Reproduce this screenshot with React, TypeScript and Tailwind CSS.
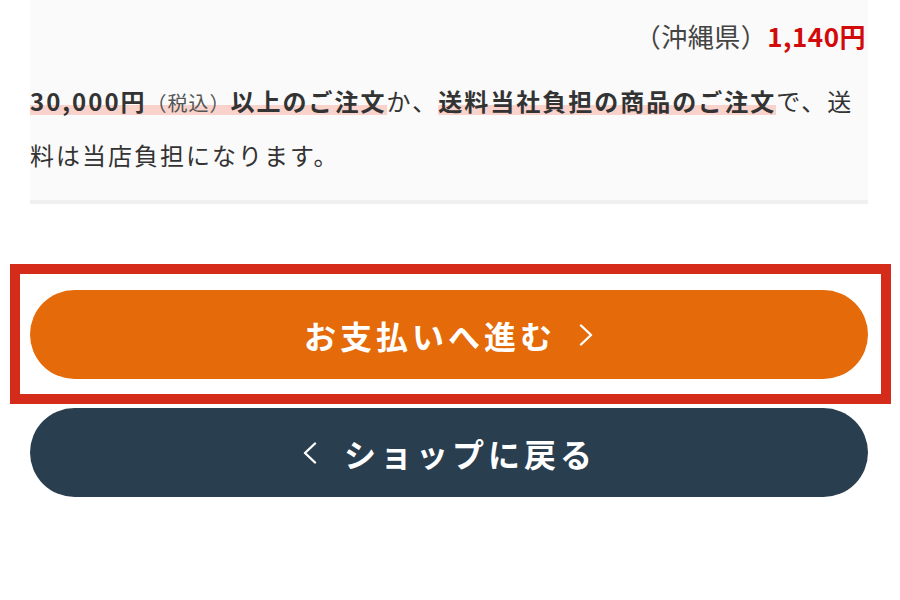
import React from "react";

const hl = "bg-[linear-gradient(transparent_62%,#f8d2cb_62%,#f8d2cb_92%,transparent_92%)] font-bold";

function Chevron({ dir }: { dir: "left" | "right" }) {
  return (
    <svg width="16" height="22" viewBox="0 0 16 22" fill="none" className="shrink-0">
      {dir === "right" ? (
        <polyline points="3,1.5 13,11 3,20.5" stroke="white" strokeWidth="2.4" strokeLinecap="round" strokeLinejoin="round" />
      ) : (
        <polyline points="13,1.5 3,11 13,20.5" stroke="white" strokeWidth="2.4" strokeLinecap="round" strokeLinejoin="round" />
      )}
    </svg>
  );
}

export default function App() {
  return (
    <div
      className="w-[900px] h-[600px] bg-white overflow-hidden"
      style={{ fontFamily: '"Noto Sans CJK JP", "Noto Sans", sans-serif' }}
    >
      <div className="mx-[30px] w-[838px] bg-[#fafafa] border-b-[4px] border-[#f0f0f0] pb-[19px]">
        <div className="flex justify-end items-center pt-[16px] h-[56px] leading-[40px]">
          <span className="text-[26px] text-[#444] tracking-[0.5px]">（沖縄県）</span>
          <span className="text-[26px] font-bold text-[#d20a0a] tracking-[0.5px] mr-[2px]">1,140円</span>
        </div>
        <p className="mt-[19px] text-[24px] leading-[52px] text-[#333] tracking-[2px]">
          <span className={hl}>
            30,000円<span className="text-[20px] font-normal text-[#555] tracking-[1px]">（税込）</span>以上のご注文
          </span>
          か、
          <span className={hl}>送料当社負担の商品のご注文</span>
          で、送料は当店負担になります。
        </p>
      </div>

      <div className="mt-[60px] ml-[10px] w-[881px] border-[10px] border-[#d52b1a] pt-[16px] pb-[15px] pl-[10px] pr-[13px]">
        <button className="w-full h-[89px] rounded-full bg-[#e46a0a] flex items-center justify-center text-white">
          <span className="text-[32px] font-bold tracking-[4px] leading-none">お支払いへ進む</span>
          <span className="ml-[22px] flex items-center">
            <Chevron dir="right" />
          </span>
        </button>
      </div>

      <button className="mt-[4px] ml-[30px] w-[838px] h-[89px] rounded-full bg-[#293e4f] flex items-center justify-center text-white">
        <span className="mr-[26px] flex items-center">
          <Chevron dir="left" />
        </span>
        <span className="text-[32px] font-bold tracking-[4px] leading-none">ショップに戻る</span>
      </button>
    </div>
  );
}
